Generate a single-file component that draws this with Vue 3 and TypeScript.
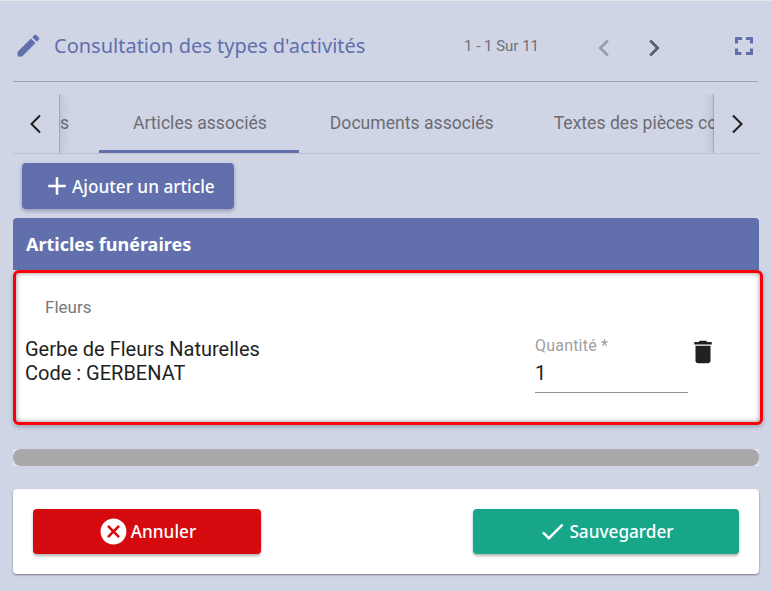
<script setup lang="ts">
const tabs = [
  { label: 'Articles associés', active: true },
  { label: 'Documents associés', active: false },
  { label: 'Textes des pièces complémentaires', active: false },
]
</script>

<template>
  <div class="page">
    <header class="head">
      <svg class="pencil" viewBox="0 0 24 24" width="29" height="29"><path d="M3 17.25V21h3.75L17.81 9.94l-3.75-3.75L3 17.25zM20.71 7.04a1 1 0 0 0 0-1.41l-2.34-2.34a1 1 0 0 0-1.41 0l-1.83 1.83 3.75 3.75 1.83-1.83z"/></svg>
      <h1 class="title">Consultation des types d'activités</h1>
      <span class="count">1 - 1 Sur 11</span>
      <svg class="pg first" viewBox="0 0 24 24" width="34" height="34"><path d="M15.41 7.41 14 6l-6 6 6 6 1.41-1.41L10.83 12z"/></svg>
      <svg class="pg" viewBox="0 0 24 24" width="34" height="34"><path d="M10 6 8.59 7.41 13.17 12l-4.58 4.59L10 18l6-6z"/></svg>
      <svg class="full" viewBox="5 5 14 14" width="18" height="18"><path d="M5 5h5.500v2.400H7.400V10H5zM13.500 5H19v5h-2.400V7.400h-3.100zM5 14h2.400v2.600H10V19H5zM16.600 14H19v5h-5.500v-2.400h3.100z"/></svg>
    </header>

    <nav class="tabs">
      <button class="arrow left">
        <svg viewBox="0 0 24 24" width="24" height="24"><path d="M16 3.500 7.500 12l8.500 8.500"/></svg>
      </button>
      <div class="scroller">
        <span class="clipped">es</span>
        <div v-for="t in tabs" :key="t.label" class="tab" :class="{ active: t.active }">{{ t.label }}</div>
      </div>
      <button class="arrow right">
        <svg viewBox="0 0 24 24" width="24" height="24"><path d="M8 3.500 16.500 12 8 20.500"/></svg>
      </button>
    </nav>

    <div class="actions">
      <button class="add">
        <svg viewBox="0 0 24 24" width="30" height="30"><path d="M19 13h-6v6h-2v-6H5v-2h6V5h2v6h6z"/></svg>
        <span>Ajouter un article</span>
      </button>
    </div>

    <section class="panel">
      <div class="panel-head">Articles funéraires</div>
      <div class="card">
        <div class="cat">Fleurs</div>
        <div class="row">
          <div class="name">Gerbe de Fleurs Naturelles<br />Code : GERBENAT</div>
          <div class="qty">
            <label>Quantité *</label>
            <div class="val">1</div>
          </div>
          <svg class="trash" viewBox="0 0 24 24" width="30" height="30"><path d="M6 19c0 1.100.9 2 2 2h8c1.100 0 2-.9 2-2V7H6v12zM19 4h-3.500l-1-1h-5l-1 1H5v2h14V4z"/></svg>
        </div>
      </div>
    </section>

    <div class="track"><div class="thumb"></div></div>

    <footer class="foot">
      <button class="btn cancel">
        <svg viewBox="0 0 24 24" width="31" height="31"><path d="M12 2a10 10 0 1 0 0 20 10 10 0 0 0 0-20zm5 13.590L15.590 17 12 13.410 8.410 17 7 15.590 10.590 12 7 8.410 8.410 7 12 10.590 15.590 7 17 8.410 13.410 12 17 15.590z"/></svg>
        <span>Annuler</span>
      </button>
      <button class="btn save">
        <svg viewBox="0 0 24 24" width="29" height="29"><path d="M9 16.170 4.830 12l-1.420 1.410L9 19 21 7l-1.410-1.410z"/></svg>
        <span>Sauvegarder</span>
      </button>
    </footer>
  </div>
</template>

<style>
html, body { margin: 0; background: #d0d5e6; }
</style>

<style scoped>
.page {
  width: 771px;
  height: 591px;
  box-sizing: border-box;
  background: #d0d5e6;
  border-top: 1px solid #e6e6e6;
  padding: 0 12px 0 13px;
  overflow: hidden;
  font-family: "Noto Sans", sans-serif;
}
button { border: 0; font: inherit; padding: 0; cursor: pointer; }

.head {
  height: 81px;
  box-sizing: border-box;
  display: flex;
  align-items: center;
  border-bottom: 1px solid #a3a3a8;
  padding-top: 9px;
  margin-right: 1px;
}
.pencil { fill: #6170ac; margin-left: 1px; }
.title {
  margin: 0 0 0 11px;
  font-size: 20px;
  font-weight: 400;
  color: #6170ac;
  flex: 1;
  white-space: nowrap;
}
.count { font: 15px Roboto, sans-serif; color: #6f7076; margin-right: 48px; }
.pg { fill: #5f6066; margin-top: 4px; }
.pg.first { fill: #9b9ea8; margin-right: 16px; }
.full { fill: #6170ac; margin-left: 64px; margin-right: 5px; }

.tabs {
  margin-top: 12px;
  height: 60px;
  box-sizing: border-box;
  display: flex;
  border-bottom: 1px solid #bec1d1;
}
.arrow {
  width: 46px;
  height: 59px;
  background: #d0d5e6;
  display: flex;
  align-items: center;
  justify-content: center;
  position: relative;
  z-index: 1;
  flex: none;
}
.arrow svg { fill: none; stroke: #1c1c1e; stroke-width: 2; }
.arrow.left {
  box-shadow: 1px 0 1px rgba(60, 60, 80, .22), 5px 0 8px rgba(60, 60, 80, .1);
  clip-path: inset(0 -14px 0 0);
}
.arrow.right {
  box-shadow: -1px 0 1px rgba(60, 60, 80, .22), -5px 0 8px rgba(60, 60, 80, .1);
  clip-path: inset(0 0 0 -14px);
  width: 45px;
}
.scroller {
  flex: 1;
  min-width: 0;
  display: flex;
  overflow: hidden;
  font: 17.6px Roboto, sans-serif;
  color: #6b6c72;
  white-space: nowrap;
}
.clipped { width: 40px; flex: none; direction: rtl; line-height: 58px; padding-right: 30px; box-sizing: border-box; }
.tab {
  flex: none;
  height: 59px;
  box-sizing: border-box;
  padding: 0 29px 0 31px;
  line-height: 58px;
}
.tab.active {
  padding: 0 32px 0 34px;
  border-bottom: 3px solid #6170ac;
}

.actions { padding: 9px; }
.add {
  height: 46px;
  width: 212px;
  padding-left: 20px;
  display: flex;
  align-items: center;
  background: #6170ac;
  color: #fff;
  border-radius: 4px;
  font-size: 17.2px;
  font-weight: 500;
  box-shadow: 0 2px 4px rgba(40, 40, 70, .35);
}
.add svg { fill: #fff; }

.panel-head {
  height: 52px;
  box-sizing: border-box;
  background: #6170ac;
  color: #fff;
  font-size: 18px;
  font-weight: 700;
  line-height: 52px;
  padding-left: 13px;
  border-radius: 4px 4px 0 0;
}
.card {
  height: 155px;
  margin-right: -4px;
  box-sizing: border-box;
  background: #fff;
  border: 3px solid #fb0007;
  border-radius: 6px;
  box-shadow: inset 0 0 5px rgba(0, 0, 0, .45), 0 2px 4px rgba(40, 40, 70, .3);
  padding: 24px 0 0 9px;
}
.cat {
  font: 17px/20px Roboto, sans-serif;
  color: #77777c;
  padding-left: 20px;
}
.row {
  display: flex;
  margin-top: 20px;
}
.name {
  font: 20px/24px Roboto, sans-serif;
  color: #1f1f22;
  width: 510px;
  white-space: nowrap;
}
.qty { width: 153px; margin-top: -1px; border-bottom: 1px solid #939393; height: 57px; box-sizing: border-box; }
.qty label { display: block; padding-top: 1px; font: 16px/18px Roboto, sans-serif; color: #a0a0a0; letter-spacing: .2px; }
.qty .val { font: 20px/24px Roboto, sans-serif; color: #1f1f22; margin-top: 6px; }
.trash { fill: #212121; }

.track {
  height: 17px;
  margin-top: 24px;
  background: #e4e6ee;
}
.thumb {
  height: 100%;
  border-radius: 8px;
  background: #a9a9a9;
}

.foot {
  margin-top: 23px;
  height: 85px;
  background: #fff;
  border-radius: 4px;
  box-shadow: 0 1px 2px rgba(40, 40, 60, .55);
  box-sizing: border-box;
  padding: 20px;
  display: flex;
  justify-content: space-between;
}
.btn {
  height: 45px;
  display: flex;
  align-items: center;
  justify-content: center;
  color: #fff;
  border-radius: 4px;
  font-size: 17.2px;
  font-weight: 500;
  box-shadow: 0 2px 3px rgba(0, 0, 0, .3);
}
.btn svg { fill: #fff; }
.cancel { width: 228px; background: #d40a0f; gap: 2px; }
.save { width: 266px; background: #18a689; gap: 2px; }
</style>
